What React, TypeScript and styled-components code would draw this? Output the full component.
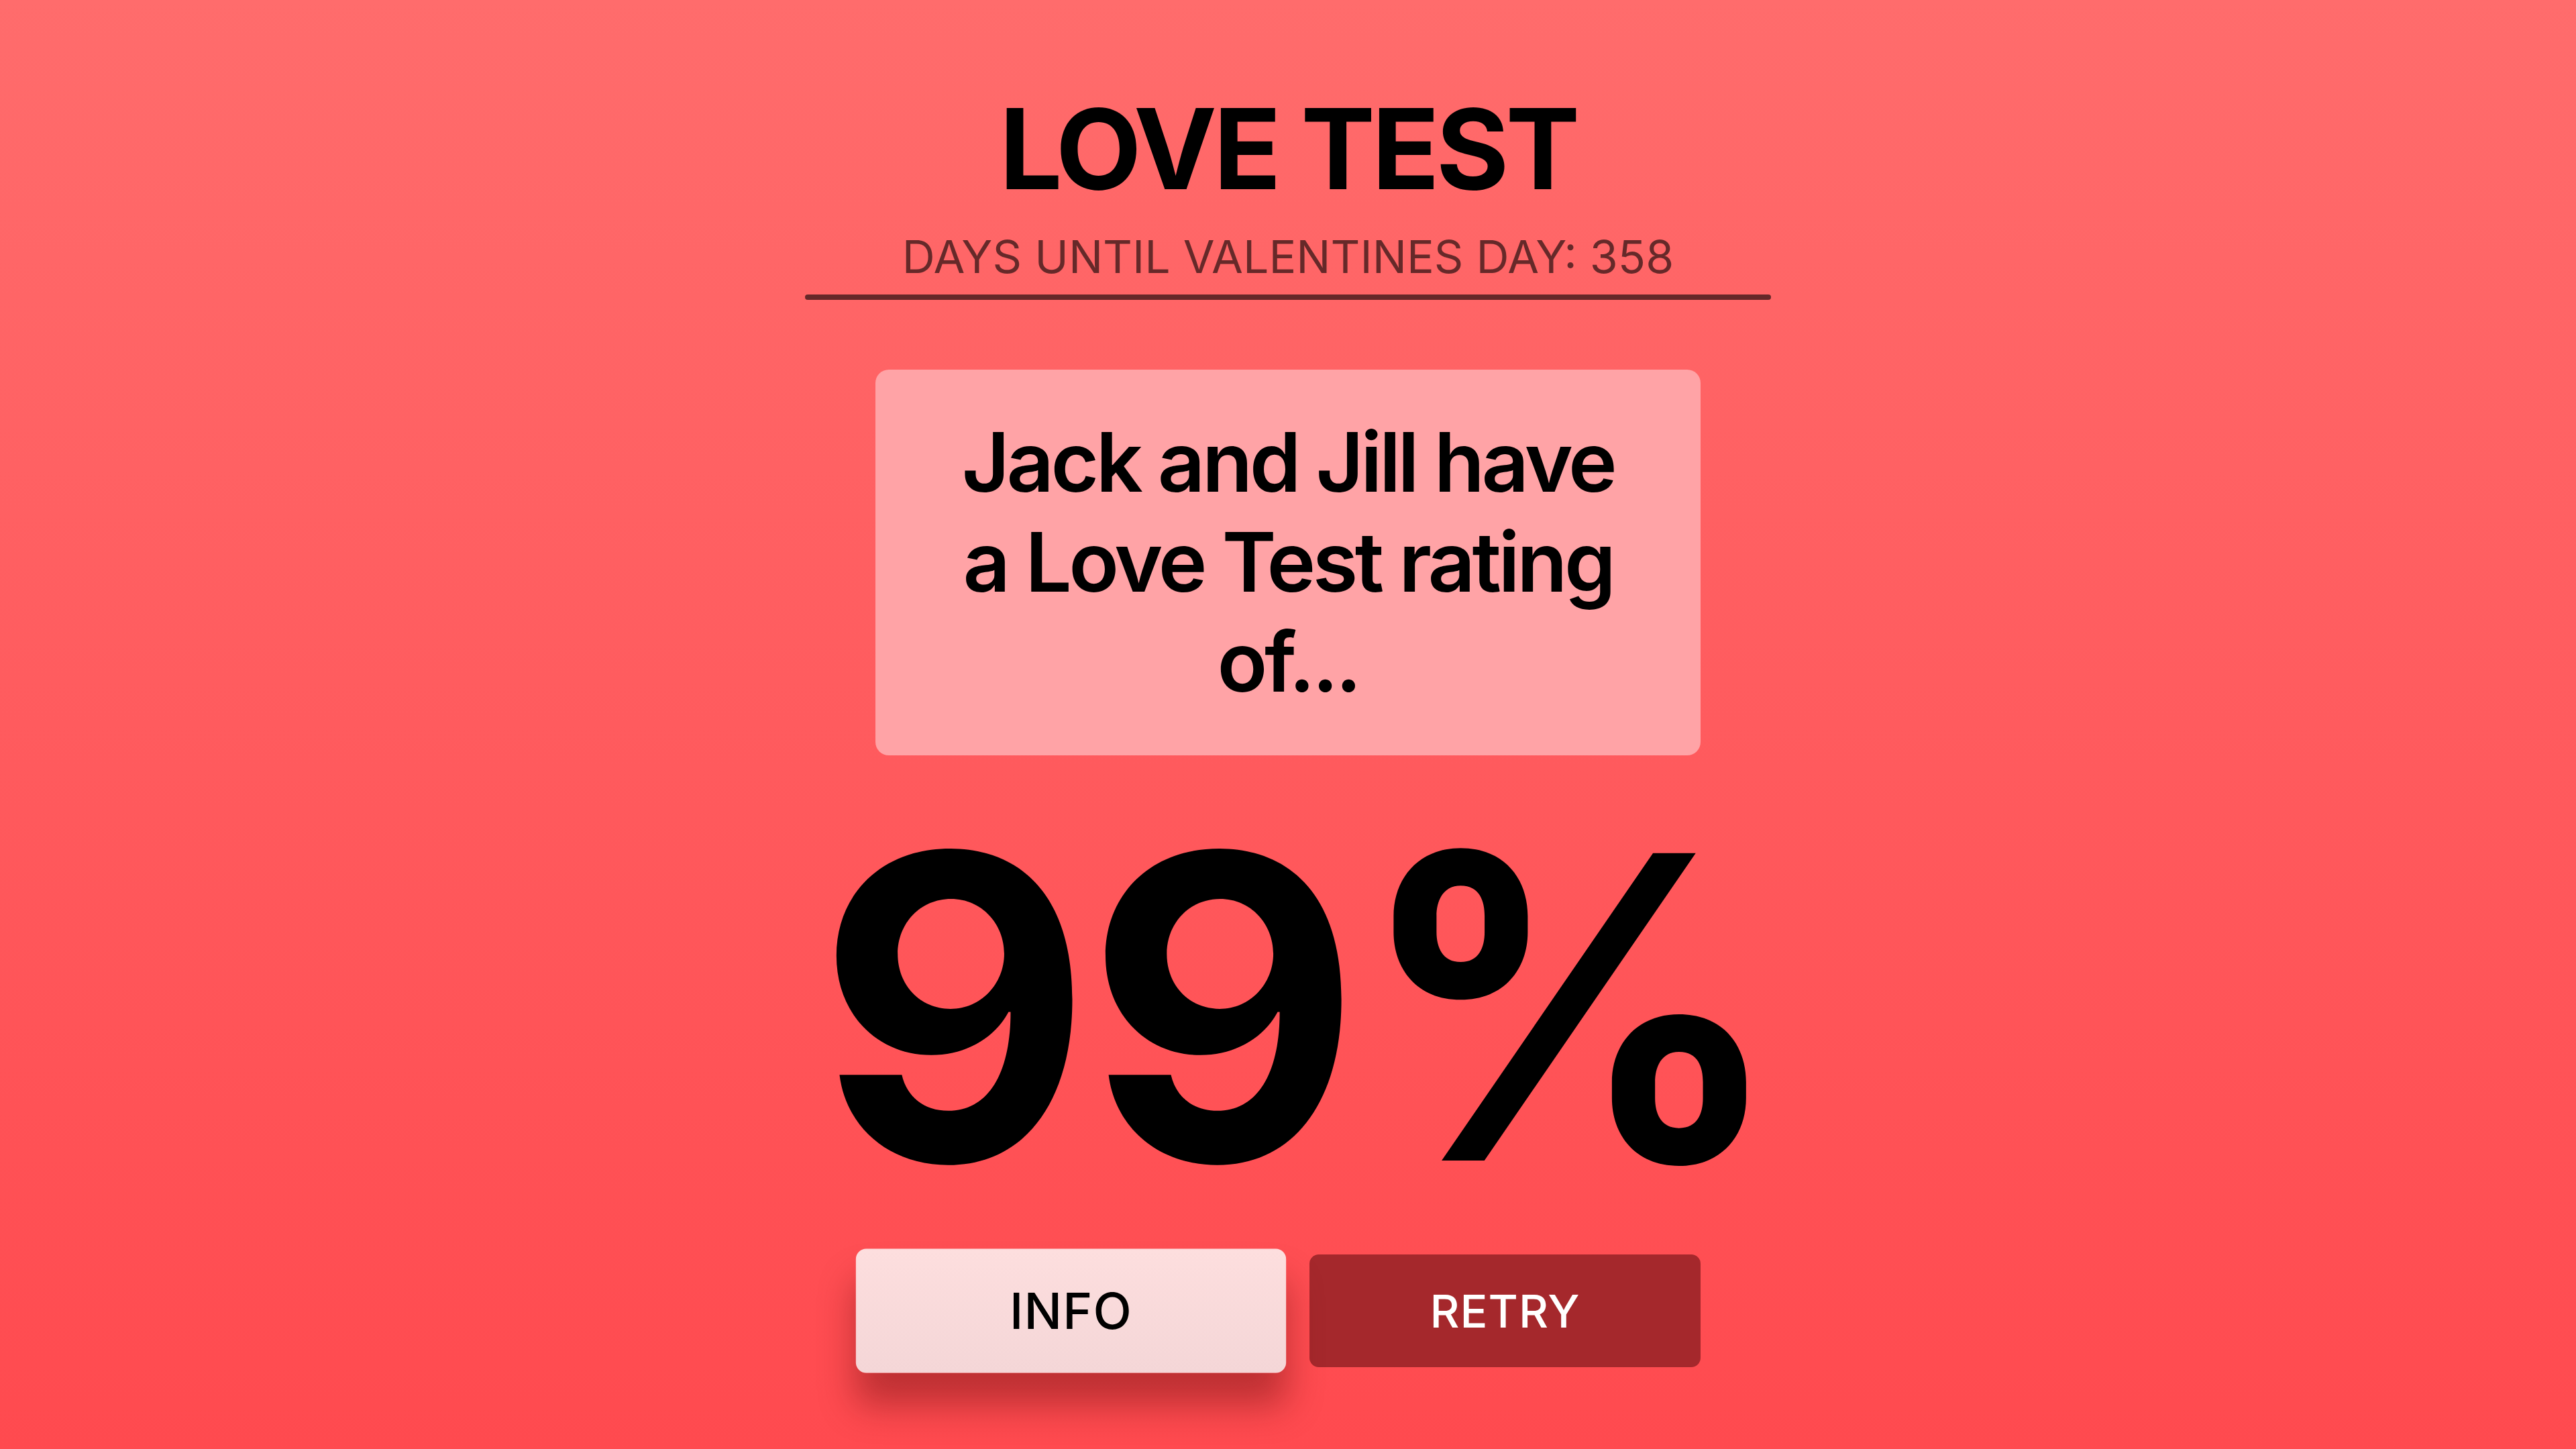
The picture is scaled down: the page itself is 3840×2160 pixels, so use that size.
import styled, { createGlobalStyle } from 'styled-components'

const GlobalStyle = createGlobalStyle`
  html, body {
    margin: 0;
    padding: 0;
  }
  body {
    font-family: Inter, 'Noto Sans', 'Liberation Sans', sans-serif;
    background: #ff5b5e;
  }
  * {
    box-sizing: border-box;
  }
`

const Page = styled.div`
  min-height: 100vh;
  display: flex;
  flex-direction: column;
  align-items: center;
  padding-top: 122px;
  background: linear-gradient(180deg, #ff6c6c 0%, #ff5b5e 50%, #ff4a4f 100%);
  color: #000;
`

const Header = styled.header`
  display: flex;
  flex-direction: column;
  align-items: center;
  width: 1440px;

  h1 {
    margin: 0;
    font-size: 166px;
    font-weight: 700;
    line-height: 1.21;
    letter-spacing: -5px;
  }

  .countdown {
    margin: 18px 0 0;
    font-size: 68px;
    font-weight: 400;
    line-height: 1.21;
    color: rgba(0, 0, 0, 0.6);
  }

  .rule {
    margin-top: 16px;
    width: 100%;
    height: 8px;
    border-radius: 4px;
    background: rgba(0, 0, 0, 0.6);
  }
`

const ResultCard = styled.div`
  margin-top: 104px;
  width: 1230px;
  padding: 64px 108px;
  border-radius: 20px;
  background: #ffa3a6;
  text-align: center;

  p {
    margin: 0;
    font-size: 123px;
    font-weight: 600;
    line-height: 1.21;
    letter-spacing: -4.5px;
  }
`

const Score = styled.div`
  margin: 60px 0 0 30px;
  font-size: 630px;
  font-weight: 700;
  line-height: 1;
  letter-spacing: -8px;
`

const ButtonRow = styled.div`
  margin-top: 54px;
  display: flex;
  gap: 64px;
`

interface ButtonProps {
  $variant: 'light' | 'dark'
  $raised?: boolean
}

const ActionButton = styled.button<ButtonProps>`
  width: 583px;
  height: 168px;
  border: none;
  border-radius: 14px;
  font-family: inherit;
  font-size: 68px;
  font-weight: 500;
  letter-spacing: 1px;
  cursor: pointer;
  color: ${({ $variant }) => ($variant === 'light' ? '#000' : '#fff')};
  background: ${({ $variant }) =>
    $variant === 'light' ? 'linear-gradient(180deg, #fddede 0%, #f4d6d7 100%)' : '#a5282c'};
  transform: ${({ $raised }) => ($raised ? 'scale(1.1)' : 'none')};
  box-shadow: ${({ $raised }) => ($raised ? '0 44px 48px rgba(110, 15, 15, 0.45)' : 'none')};
`

const App = () => {
  return (
    <Page>
      <GlobalStyle />
      <Header>
        <h1>LOVE TEST</h1>
        <p className="countdown">DAYS UNTIL VALENTINES DAY: 358</p>
        <div className="rule" />
      </Header>
      <ResultCard>
        <p>Jack and Jill have a Love Test rating of...</p>
      </ResultCard>
      <Score>99%</Score>
      <ButtonRow>
        <ActionButton $variant="light" $raised>
          INFO
        </ActionButton>
        <ActionButton $variant="dark">RETRY</ActionButton>
      </ButtonRow>
    </Page>
  )
}

export default App
